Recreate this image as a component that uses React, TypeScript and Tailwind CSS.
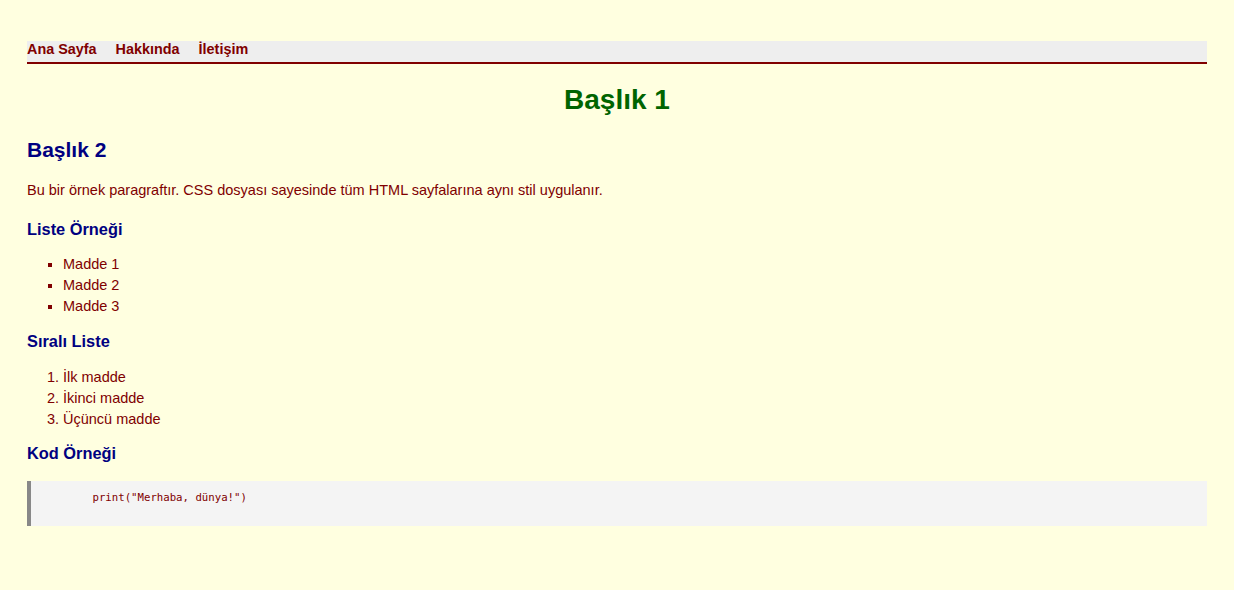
import React from "react";

export default function App() {
  return (
    <div
      className="min-h-[590px] w-full bg-[#ffffe0] px-[27px] pt-[41px] pb-[40px] text-[14.5px] text-[#800000]"
      style={{ fontFamily: '"Liberation Sans", Arial, sans-serif' }}
    >
      <nav className="flex gap-[19px] border-b-2 border-[#800000] bg-[#eeeeee] pb-[5px] text-[14.4px] font-bold leading-[16px]">
        <a className="text-[#800000]">Ana Sayfa</a>
        <a className="text-[#800000]">Hakkında</a>
        <a className="text-[#800000]">İletişim</a>
      </nav>

      <h1 className="mt-[20px] text-center text-[28px] font-bold leading-[32px] text-[#006400]">
        Başlık 1
      </h1>

      <h2 className="mt-[22px] text-[21px] font-bold leading-[24px] text-[#000080]">
        Başlık 2
      </h2>

      <p className="mt-[17.5px] leading-[21px]">
        Bu bir örnek paragraftır. CSS dosyası sayesinde tüm HTML sayfalarına aynı stil uygulanır.
      </p>

      <h3 className="mt-[19px] text-[16.38px] font-bold leading-[19px] text-[#000080]">
        Liste Örneği
      </h3>

      <ul className="mt-[15px] list-[square] pl-[36px] leading-[21px]">
        <li>Madde 1</li>
        <li>Madde 2</li>
        <li>Madde 3</li>
      </ul>

      <h3 className="mt-[15px] text-[16.38px] font-bold leading-[19px] text-[#000080]">
        Sıralı Liste
      </h3>

      <ol className="mt-[16px] list-decimal pl-[36px] leading-[21px]">
        <li>İlk madde</li>
        <li>İkinci madde</li>
        <li>Üçüncü madde</li>
      </ol>

      <h3 className="mt-[14px] text-[16.38px] font-bold leading-[19px] text-[#000080]">
        Kod Örneği
      </h3>

      <pre
        className="mt-[18.5px] h-[45px] border-l-4 border-[#888888] bg-[#f4f4f4] pt-[10px] pl-[10px] text-[10.7px] leading-[13px] whitespace-pre text-[#800000]"
        style={{ fontFamily: '"DejaVu Sans Mono", "Liberation Mono", monospace' }}
      >
        {'        print("Merhaba, dünya!")'}
      </pre>
    </div>
  );
}
